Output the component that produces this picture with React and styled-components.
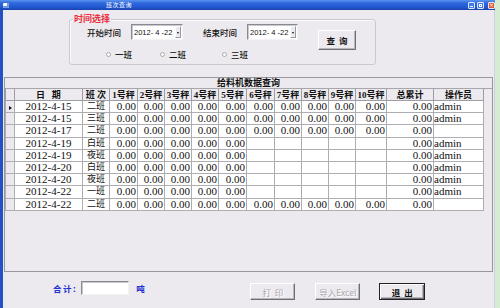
import React from 'react'
import styled, { createGlobalStyle } from 'styled-components'

const GlobalStyle = createGlobalStyle`
  html, body { margin:0; padding:0; }
  body {
    width:500px;
    height:308px;
    overflow:hidden;
    background:#d5ecd2;
    font-family:"Liberation Serif","Noto Sans CJK SC",serif;
    color:#111;
  }
`

const Window = styled.div`
  width:495px;
  height:308px;
  display:flex;
  flex-direction:column;
`

const TitleBar = styled.div`
  height:10px;
  flex:none;
  display:flex;
  align-items:center;
  padding:0 0 0 3px;
  background:linear-gradient(to bottom,#5b95f0 0%,#2f68dc 30%,#2358d2 70%,#1a44ad 100%);
`

const AppIcon = styled.span`
  width:6px;
  height:5px;
  background:#fff;
  border-radius:1px;
  box-shadow:inset -2px -2px 0 #6e9ae6;
`

const Title = styled.span`
  margin-left:97px;
  font-family:"Noto Sans CJK SC",sans-serif;
  font-size:6px;
  line-height:10px;
  color:#fff;
  letter-spacing:0.5px;
`

const Controls = styled.div`
  margin-left:auto;
  display:flex;
  gap:2px;
`

const CtlButton = styled.span`
  width:7px;
  height:7px;
  box-sizing:border-box;
  border:1px solid #dfe8fb;
  border-radius:1px;
  background:${p => (p.$close ? '#e1552f' : '#3f7ae8')};
  margin-left:${p => (p.$close ? '2px' : '0')};
  display:flex;
  align-items:center;
  justify-content:center;
  color:#fff;
  font-family:"DejaVu Sans",sans-serif;
  font-size:6px;
  line-height:1;
  &::after{
    content:'';
    display:block;
    ${p => p.$kind === 'min' && 'width:3px;height:1px;background:#fff;margin-top:2px;'}
    ${p => p.$kind === 'max' && 'width:3px;height:3px;border:1px solid #fff;box-sizing:border-box;'}
  }
`

const Body = styled.div`
  flex:1;
  display:flex;
  flex-direction:column;
  background:#eceaee;
  border-left:3px solid #2352c6;
  box-shadow:inset -1px 0 0 #c9d2e2;
`

const GroupBox = styled.div`
  position:relative;
  margin:9px 0 0 66px;
  width:307px;
  height:46px;
  box-sizing:border-box;
  border:1px solid #cbc9cf;
  border-radius:3px;
  box-shadow:inset 1px 1px 0 #fbfbfd;
  padding-top:4px;
  display:flex;
`

const Legend = styled.span`
  position:absolute;
  top:-7px;
  left:3px;
  padding:0 1px;
  background:#eceaee;
  color:#ea2f3e;
  font-family:"Noto Sans CJK SC",sans-serif;
  font-weight:bold;
  font-size:9px;
  line-height:11px;
`

const FilterColumn = styled.div`
  width:228px;
  display:flex;
  flex-direction:column;
`

const FieldRow = styled.div`
  display:flex;
  align-items:center;
  height:16px;
`

const Label = styled.span`
  margin-left:${p => p.$ml}px;
  width:34px;
  font-family:"Noto Sans CJK SC",sans-serif;
  font-size:8.5px;
  font-weight:500;
  line-height:16px;
  white-space:nowrap;
`

const DatePicker = styled.div`
  margin-left:10px;
  width:${p => p.$w}px;
  height:16px;
  box-sizing:border-box;
  background:#fff;
  border:1px solid;
  border-color:#8a8990 #f4f4f6 #f4f4f6 #8a8990;
  box-shadow:inset 1px 1px 0 #c9c8cc;
  display:flex;
  align-items:center;
  padding-left:2px;
  font-family:"Liberation Sans",sans-serif;
  font-size:7.5px;
  white-space:pre;
`

const DropButton = styled.span`
  margin-left:auto;
  margin-right:1px;
  width:6px;
  height:12px;
  box-sizing:border-box;
  background:#eceaee;
  border:1px solid;
  border-color:#fff #9a99a0 #9a99a0 #fff;
  display:flex;
  align-items:center;
  justify-content:center;
  &::after{
    content:'';
    border-left:1.5px solid transparent;
    border-right:1.5px solid transparent;
    border-top:2px solid #111;
    margin-top:2px;
  }
`

const RadioRow = styled.div`
  display:flex;
  margin-top:9px;
  padding-left:36px;
  height:10px;
  align-items:center;
`

const RadioItem = styled.label`
  width:${p => p.$w}px;
  display:flex;
  align-items:center;
  gap:4px;
  font-family:"Noto Sans CJK SC",sans-serif;
  font-size:8.5px;
  font-weight:500;
  &::before{
    content:'';
    width:5px;
    height:5px;
    box-sizing:border-box;
    border-radius:50%;
    border:1px solid #a9a8ae;
    background:#fff;
  }
`

const Button = styled.div`
  width:${p => p.$w}px;
  height:${p => p.$h || 17}px;
  margin-left:${p => p.$ml || 0}px;
  margin-top:${p => p.$mt || 0}px;
  box-sizing:border-box;
  display:flex;
  align-items:center;
  justify-content:center;
  background:#eceaee;
  border:1px solid;
  border-color:${p => (p.$default ? '#222' : '#fff #6f6e74 #6f6e74 #fff')};
  box-shadow:${p => (p.$default
    ? 'inset 1px 1px 0 #fff, inset -1px -1px 0 #6f6e74, inset -2px -2px 0 #b8b7bc'
    : 'inset -1px -1px 0 #b8b7bc')};
  font-family:"Noto Sans CJK SC",sans-serif;
  font-size:8.5px;
  white-space:pre;
  color:${p => (p.$disabled ? '#a9a8ad' : '#111')};
  text-shadow:${p => (p.$disabled ? '1px 1px 0 #fff' : 'none')};
  font-weight:${p => (p.$disabled ? 'normal' : 'bold')};
`

const TablePanel = styled.div`
  margin:12px 0 0 1px;
  width:489px;
  height:195px;
  box-sizing:border-box;
  border:1px solid #98979d;
  display:flex;
  flex-direction:column;
`

const Caption = styled.div`
  height:11px;
  box-sizing:border-box;
  border-bottom:1px solid #a7a6ab;
  text-align:center;
  font-family:"Noto Sans CJK SC",sans-serif;
  font-weight:bold;
  font-size:9px;
  line-height:10px;
`

const Grid = styled.table`
  width:478px;
  table-layout:fixed;
  border-collapse:collapse;
`

const Th = styled.th`
  height:11px;
  padding:0;
  background:#eceaee;
  border:1px solid #9e9da3;
  border-top:none;
  font-family:"Liberation Serif","Noto Sans CJK SC",serif;
  font-size:9px;
  line-height:10px;
  font-weight:bold;
  white-space:pre;
  text-align:center;
  overflow:hidden;
`

const Td = styled.td`
  height:11.2px;
  padding:0 ${p => (p.$align === 'right' ? 1 : 0)}px 0 0;
  background:${p => (p.$sel ? '#eceaee' : '#fff')};
  border:1px solid #aeadb2;
  font-size:${p => (p.$cjk ? 9 : 11)}px;
  line-height:11px;
  text-align:${p => p.$align || 'center'};
  white-space:nowrap;
  overflow:hidden;
  vertical-align:middle;
`

const RowPointer = styled.span`
  display:inline-block;
  border-top:2.5px solid transparent;
  border-bottom:2.5px solid transparent;
  border-left:3px solid #111;
  vertical-align:middle;
`

const Footer = styled.div`
  display:flex;
  align-items:flex-start;
  padding:9px 0 0 50px;
`

const TotalText = styled.span`
  margin-left:${p => p.$ml || 0}px;
  font-family:"Noto Sans CJK SC",sans-serif;
  font-weight:bold;
  font-size:8.5px;
  line-height:14px;
  letter-spacing:1.5px;
  color:#1d2ed0;
`

const TotalInput = styled.div`
  margin-left:4px;
  width:48px;
  height:14px;
  box-sizing:border-box;
  background:#fff;
  border:1px solid;
  border-color:#8a8990 #f4f4f6 #f4f4f6 #8a8990;
  box-shadow:inset 1px 1px 0 #c9c8cc;
`

const columns = [9, 68, 27, 28, 27, 27, 27, 28, 28, 27, 27, 27, 31, 47, 50]
const headers = ['日   期', '班 次', '1号秤', '2号秤', '3号秤', '4号秤', '5号秤', '6号秤', '7号秤', '8号秤', '9号秤', '10号秤', '总累计', '操作员']

const rows = [
  { date: '2012-4-15', shift: '二班', full: true, op: 'admin' },
  { date: '2012-4-15', shift: '三班', full: true, op: 'admin' },
  { date: '2012-4-17', shift: '二班', full: true, op: '' },
  { date: '2012-4-19', shift: '白班', full: false, op: 'admin' },
  { date: '2012-4-19', shift: '夜班', full: false, op: 'admin' },
  { date: '2012-4-20', shift: '白班', full: false, op: 'admin' },
  { date: '2012-4-20', shift: '夜班', full: false, op: 'admin' },
  { date: '2012-4-22', shift: '一班', full: false, op: 'admin' },
  { date: '2012-4-22', shift: '二班', full: true, op: '' },
]

const App = () => {
  return (
    <>
      <GlobalStyle />
      <Window>
        <TitleBar>
          <AppIcon />
          <Title>班次查询</Title>
          <Controls>
            <CtlButton $kind="min" />
            <CtlButton $kind="max" />
            <CtlButton $close>×</CtlButton>
          </Controls>
        </TitleBar>
        <Body>
          <GroupBox>
            <Legend>时间选择</Legend>
            <FilterColumn>
              <FieldRow>
                <Label $ml={17}>开始时间</Label>
                <DatePicker $w={52}>2012- 4 -22<DropButton /></DatePicker>
                <Label $ml={20}>结束时间</Label>
                <DatePicker $w={51}>2012- 4 -22<DropButton /></DatePicker>
              </FieldRow>
              <RadioRow>
                <RadioItem $w={54}>一班</RadioItem>
                <RadioItem $w={62}>二班</RadioItem>
                <RadioItem $w={40}>三班</RadioItem>
              </RadioRow>
            </FilterColumn>
            <Button $w={38} $h={20} $ml={20} $mt={6}>查  询</Button>
          </GroupBox>

          <TablePanel>
            <Caption>给料机数据查询</Caption>
            <Grid>
              <colgroup>
                {columns.map((w, i) => <col key={i} style={{ width: w }} />)}
              </colgroup>
              <thead>
                <tr>
                  <Th />
                  {headers.map(h => <Th key={h}>{h}</Th>)}
                </tr>
              </thead>
              <tbody>
                {rows.map((r, i) => (
                  <tr key={i}>
                    <Td $sel>{i === 0 && <RowPointer />}</Td>
                    <Td>{r.date}</Td>
                    <Td $cjk>{r.shift}</Td>
                    {Array.from({ length: 10 }).map((_, k) => (
                      <Td key={k} $align="right">{r.full || k < 5 ? '0.00' : ''}</Td>
                    ))}
                    <Td $align="right">0.00</Td>
                    <Td $align="left">{r.op}</Td>
                  </tr>
                ))}
              </tbody>
            </Grid>
          </TablePanel>

          <Footer>
            <TotalText>合计:</TotalText>
            <TotalInput />
            <TotalText $ml={7}>吨</TotalText>
            <Button $w={45} $ml={104} $mt={2} $disabled>打  印</Button>
            <Button $w={45} $ml={20} $mt={2} $disabled>导入Excel</Button>
            <Button $w={46} $ml={19} $mt={2} $default>退  出</Button>
          </Footer>
        </Body>
      </Window>
    </>
  )
}

export default App
